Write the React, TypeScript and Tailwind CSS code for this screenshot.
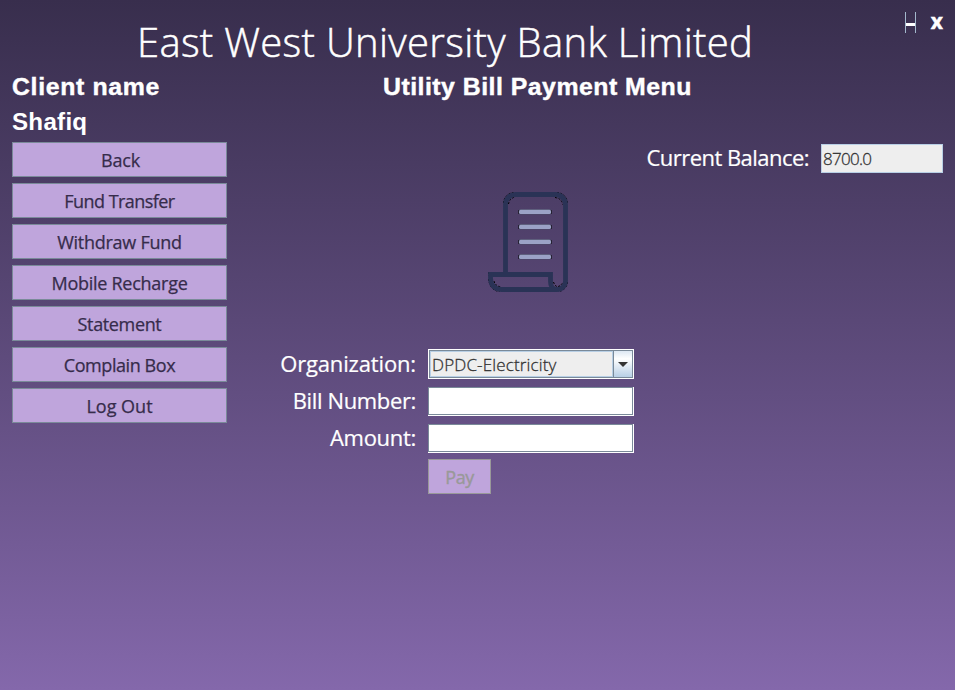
import React from "react";

const menu: [string, string][] = [
  ["Back", "tracking-[-0.2px] pl-[2px]"],
  ["Fund Transfer", "tracking-[-0.55px]"],
  ["Withdraw Fund", "tracking-[-0.25px]"],
  ["Mobile Recharge", "tracking-[-0.27px]"],
  ["Statement", "tracking-[-0.35px]"],
  ["Complain Box", "tracking-[-0.42px]"],
  ["Log Out", "tracking-[0px]"],
];

const rows = [17.5, 32.5, 47.5, 62.5];

function BillIcon() {
  return (
    <svg width="80" height="100" viewBox="0 0 80 100" fill="none">
      <g stroke="#000" strokeWidth="1" strokeDasharray="2 1.500">
        <path d="M15.500 11a11 11 0 0 1 10-10.500M69 .5A11 11 0 0 1 79.500 11M79.500 90a10 10 0 0 1-9 9.500M.5 80v4M.5 87c.5 6 4 12 11 12.500M20.500 12q1-6 7-7M67 5.500q7 1 7.500 7M6 89q1 5 7 6" />
      </g>
      <path
        d="M17.500 81V12.500a10 10 0 0 1 10-10h40a10 10 0 0 1 10 10V89a8.500 8.500 0 0 1-8.500 8.500c-5 0-6.500-4-6.500-8V82.500H2.500V86c0 7 4.500 11.500 11 11.500H70"
        stroke="#2a3356"
        strokeWidth="4.800"
      />
      <path d="M65.500 90q1.500 4.500 4 4.500t4.500-3" stroke="#000" strokeWidth="1" strokeDasharray="2 1.500" />
      {rows.map((y) => (
        <g key={y}>
          <rect x="30.500" y={y - 0.5} width="33" height="5.500" rx="2" fill="#4b4a66" />
          <path d={`M31 ${y + 0.5}v4M63 ${y + 0.5}v4`} stroke="#000" strokeWidth="1" />
          <rect x="31" y={y + 0.3} width="32" height="4.200" rx="1.500" fill="#9ba2c6" />
        </g>
      ))}
    </svg>
  );
}

function Field() {
  return (
    <div className="h-[29px] w-[206px] border-r border-b border-white bg-[#7a8a99] p-px">
      <input className="block h-full w-full bg-white px-1 outline-none" />
    </div>
  );
}

export default function App() {
  return (
    <div className="flex h-[690px] w-[955px] flex-col overflow-hidden bg-linear-to-b from-[#382e4d] to-[#8468ab] font-['Open_Sans',sans-serif] text-white">
      <header className="flex h-[72px] items-start pl-[137px]">
        <h1 className="mt-[15px] w-[630px] whitespace-nowrap text-[40px] leading-[54px] font-light tracking-[0.32px] [-webkit-text-stroke:0.5px_white]">East West University Bank Limited</h1>
        <div className="mt-3 ml-auto flex h-[21px] items-start pr-3">
          <button className="flex h-[21px] w-[11px] justify-center border-x border-[#a3b8cc] pt-[11px]">
            <span className="h-[3px] w-[9px] shrink-0 bg-white" />
          </button>
          <button className="mt-[-1px] ml-[15px] font-['Noto_Sans',sans-serif] text-[21px] leading-[20px] font-bold [-webkit-text-stroke:0.5px_white]">x</button>
        </div>
      </header>
      <div className="flex h-[32px] pl-[12px] font-['Liberation_Sans',sans-serif] text-[23px] leading-[30px] font-bold whitespace-nowrap [-webkit-text-stroke:0.4px_white]">
        <span className="w-[371px] origin-left scale-x-[1.08] tracking-[0.6px]">Client name</span>
        <h2 className="origin-left scale-x-[1.08] tracking-[0.45px]">Utility Bill Payment Menu</h2>
      </div>
      <div className="flex pl-[12px]">
        <aside className="w-[215px]">
          <div className="h-[38px] origin-left scale-x-[1.05] font-['Liberation_Sans',sans-serif] text-[23px] leading-[36px] font-bold tracking-[0.25px]">Shafiq</div>
          <nav className="flex flex-col gap-[6px]">
            {menu.map(([name, spacing]) => (
              <button key={name} className={`h-[35px] border border-[#7a8a99] bg-[#bfa5dc] pt-[2px] text-[18px] leading-[31px] font-normal text-[#362c4b] [-webkit-text-stroke:0.25px_#362c4b] ${spacing}`}>
                {name}
              </button>
            ))}
          </nav>
        </aside>
        <main className="flex w-[716px] flex-col">
          <div className="mt-[40px] flex h-[29px] items-center justify-end">
            <span className="mt-[-2px] mr-[12px] text-[22px] leading-[29px] tracking-[-0.54px] [-webkit-text-stroke:0.2px_white]">Current Balance:</span>
            <div className="h-[29px] w-[122px] border border-[#b8cfe5] bg-[#eee] pl-[1px] text-[17px] leading-[28px] font-light tracking-[-0.7px] text-[#333] [-webkit-text-stroke:0.3px_#333]">8700.0</div>
          </div>
          <div className="mt-[19px] ml-[261px] h-[100px]">
            <BillIcon />
          </div>
          <div className="mt-[56px] flex">
            <div className="w-[189px] text-right text-[22px] leading-[37px] [-webkit-text-stroke:0.2px_white]">
              <div className="mt-[-3px] tracking-[-0.15px]">Organization:</div>
              <div className="tracking-[-0.36px]">Bill Number:</div>
              <div className="tracking-[-0.3px]">Amount:</div>
            </div>
            <div className="ml-[12px] flex flex-col">
              <div className="mt-px flex h-[30px] w-[206px] border border-white bg-[#7a8a99] p-px">
                <div className="h-[26px] w-[183px] border border-[#b8cfe5] bg-[#eee] pl-px text-[17px] leading-[26px] font-light tracking-[0.15px] text-[#333] [-webkit-text-stroke:0.3px_#333]">DPDC-Electricity</div>
                <div className="ml-px flex flex-1 items-center justify-center bg-linear-to-b from-[#dde8f3] via-white via-30% to-[#b8cfe5]">
                  <svg width="10" height="5" viewBox="0 0 10 5" fill="#333"><path d="M0 0h10L5 5z" /></svg>
                </div>
              </div>
              <div className="mt-[8px]"><Field /></div>
              <div className="mt-[8px]"><Field /></div>
              <button className="mt-[6px] h-[35px] w-[63px] border border-[#999] bg-[#bfa5dc] pt-[2px] text-[18px] leading-[31px] font-normal tracking-[-0.5px] text-[#999] [-webkit-text-stroke:0.4px_#999]">Pay</button>
            </div>
          </div>
        </main>
      </div>
    </div>
  );
}
